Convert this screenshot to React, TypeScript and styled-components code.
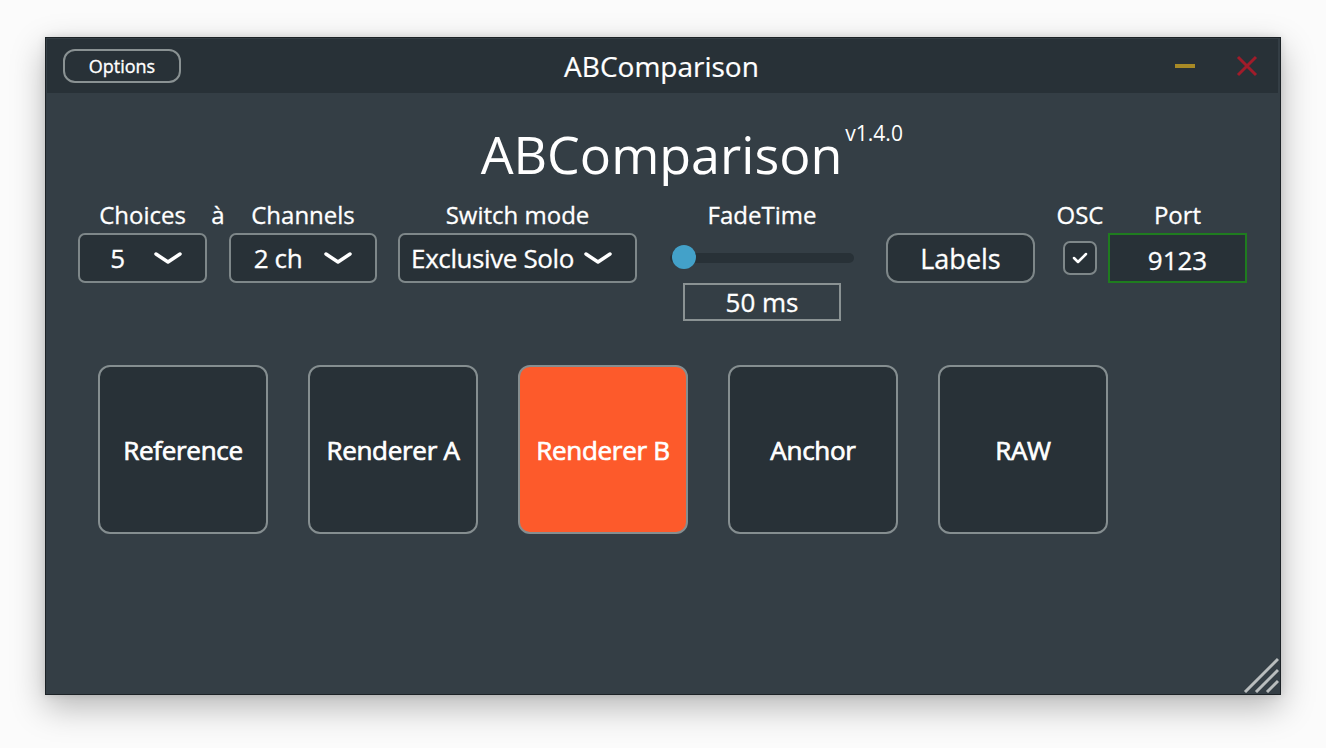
import React from "react";
import styled, { createGlobalStyle } from "styled-components";

const GlobalStyle = createGlobalStyle`
  html, body {
    margin: 0;
    padding: 0;
    background: #ffffff;
    font-family: "Open Sans", "Noto Sans", sans-serif;
  }
`;

const Page = styled.div`
  width: 1326px;
  height: 748px;
  padding: 37px 0 0 45px;
  box-sizing: border-box;
  background: #fbfbfb;
`;

const Window = styled.div`
  position: relative;
  width: 1236px;
  height: 658px;
  box-sizing: border-box;
  border: 1px solid #1c2226;
  background: #343e45;
  box-shadow: 0 12px 32px rgba(0, 0, 0, 0.28), 0 0 8px rgba(0, 0, 0, 0.12);
  display: flex;
  flex-direction: column;
  color: #ffffff;
`;

const TitleBar = styled.div`
  height: 54px;
  margin: 1px 2px 0 1px;
  background: #283137;
  display: flex;
  align-items: center;
  padding: 0 20px 0 16px;
`;

const OptionsButton = styled.div`
  width: 118px;
  height: 34px;
  box-sizing: border-box;
  border: 2px solid #8a9293;
  border-radius: 12px;
  background: #283137;
  display: flex;
  align-items: center;
  justify-content: center;
  font-size: 18px;
  -webkit-text-stroke: 0.35px #ffffff;
`;

const WindowTitle = styled.div`
  flex: 1;
  text-align: center;
  font-size: 28px;
  padding-right: 32px;
  -webkit-text-stroke: 0.2px #ffffff;
`;

const TitleIcons = styled.div`
  display: flex;
  align-items: center;
  gap: 40px;
`;

const Heading = styled.div`
  margin-top: 26px;
  height: 70px;
  text-align: center;
  font-size: 52px;
  line-height: 70px;
  white-space: nowrap;
`;

const Version = styled.span`
  display: inline-block;
  width: 0;
  vertical-align: top;
  font-size: 21px;
  line-height: 20px;
  margin-top: 4px;
  padding-left: 3px;
`;

const ControlRow = styled.div`
  margin-top: 12px;
  padding-left: 32px;
  display: flex;
  align-items: flex-start;
`;

const Column = styled.div<{ $w: number; $ml?: number }>`
  width: ${(p) => p.$w}px;
  margin-left: ${(p) => p.$ml ?? 0}px;
  display: flex;
  flex-direction: column;
  align-items: center;
`;

const Label = styled.div`
  height: 30px;
  line-height: 28px;
  margin-bottom: 2px;
  font-size: 24px;
  white-space: nowrap;
  -webkit-text-stroke: 0.3px #ffffff;
`;

const Combo = styled.div`
  width: 100%;
  height: 50px;
  box-sizing: border-box;
  border: 2px solid #7e8789;
  border-radius: 7px;
  background: #283137;
  display: flex;
  align-items: center;
  padding-right: 22px;
`;

const ComboText = styled.div`
  flex: 1;
  text-align: center;
  font-size: 26px;
  letter-spacing: -0.4px;
  white-space: nowrap;
  padding-left: 2px;
  -webkit-text-stroke: 0.3px #ffffff;
`;

const Slider = styled.div`
  position: relative;
  width: 100%;
  height: 50px;
  display: flex;
  align-items: center;
`;

const Track = styled.div`
  width: 100%;
  height: 10px;
  border-radius: 5px;
  background: #283137;
`;

const Thumb = styled.div`
  position: absolute;
  left: 2px;
  top: 12px;
  width: 24px;
  height: 24px;
  border-radius: 50%;
  background: #43a1c9;
`;

const ValueBox = styled.div`
  width: 158px;
  height: 38px;
  box-sizing: border-box;
  border: 2px solid #8a9293;
  display: flex;
  align-items: center;
  justify-content: center;
  font-size: 26px;
  -webkit-text-stroke: 0.3px #ffffff;
`;

const PushButton = styled.div`
  width: 100%;
  height: 50px;
  box-sizing: border-box;
  border: 2px solid #7e8789;
  border-radius: 12px;
  background: #283137;
  display: flex;
  align-items: center;
  justify-content: center;
  font-size: 27px;
  -webkit-text-stroke: 0.3px #ffffff;
`;

const CheckBox = styled.div`
  margin-top: 8px;
  width: 34px;
  height: 34px;
  box-sizing: border-box;
  border: 2px solid #7e8789;
  border-radius: 7px;
  background: #283137;
  display: flex;
  align-items: center;
  justify-content: center;
`;

const PortBox = styled.div`
  width: 100%;
  height: 50px;
  box-sizing: border-box;
  border: 2px solid #1f7c1f;
  background: #283137;
  display: flex;
  align-items: center;
  justify-content: center;
  font-size: 26px;
  padding-top: 4px;
  -webkit-text-stroke: 0.3px #ffffff;
`;

const ChoiceRow = styled.div`
  margin-top: 44px;
  padding-left: 52px;
  display: flex;
  gap: 40px;
`;

const ChoiceButton = styled.div<{ $active?: boolean }>`
  width: 170px;
  height: 169px;
  box-sizing: border-box;
  border: 2px solid #858e90;
  border-radius: 12px;
  background: ${(p) => (p.$active ? "#fd5a2b" : "#283137")};
  display: flex;
  align-items: center;
  justify-content: center;
  font-size: 26px;
  letter-spacing: -0.3px;
  white-space: nowrap;
  -webkit-text-stroke: 0.7px #ffffff;
`;

const Grip = styled.svg`
  position: absolute;
  right: 1px;
  bottom: 1px;
`;

const Chevron = () => (
  <svg width="30" height="16" viewBox="0 0 30 16">
    <path d="M3 4 L15 12 L27 4" fill="none" stroke="#ffffff" strokeWidth="3.5" strokeLinecap="round" strokeLinejoin="round" />
  </svg>
);

const choices = [
  { name: "Reference" },
  { name: "Renderer A" },
  { name: "Renderer B", active: true },
  { name: "Anchor" },
  { name: "RAW" },
];

export default function App() {
  return (
    <>
      <GlobalStyle />
      <Page>
        <Window>
          <TitleBar>
            <OptionsButton>Options</OptionsButton>
            <WindowTitle>ABComparison</WindowTitle>
            <TitleIcons>
              <svg width="22" height="20" viewBox="0 0 22 20">
                <rect x="1" y="8" width="20" height="4" fill="#a88a26" />
              </svg>
              <svg width="22" height="22" viewBox="0 0 22 22">
                <path d="M2 2 L20 20 M20 2 L2 20" stroke="#a01c2a" strokeWidth="3" />
              </svg>
            </TitleIcons>
          </TitleBar>

          <Heading>
            ABComparison<Version>v1.4.0</Version>
          </Heading>

          <ControlRow>
            <Column $w={129}>
              <Label>Choices</Label>
              <Combo>
                <ComboText>5</ComboText>
                <Chevron />
              </Combo>
            </Column>
            <Column $w={22}>
              <Label>à</Label>
            </Column>
            <Column $w={148}>
              <Label>Channels</Label>
              <Combo>
                <ComboText>2 ch</ComboText>
                <Chevron />
              </Combo>
            </Column>
            <Column $w={239} $ml={21}>
              <Label>Switch mode</Label>
              <Combo>
                <ComboText>Exclusive Solo</ComboText>
                <Chevron />
              </Combo>
            </Column>
            <Column $w={184} $ml={33}>
              <Label>FadeTime</Label>
              <Slider>
                <Track />
                <Thumb />
              </Slider>
              <ValueBox>50 ms</ValueBox>
            </Column>
            <Column $w={149} $ml={32}>
              <Label />
              <PushButton>Labels</PushButton>
            </Column>
            <Column $w={34} $ml={28}>
              <Label>OSC</Label>
              <CheckBox>
                <svg width="18" height="14" viewBox="0 0 18 14">
                  <path d="M3 7 L7 11 L15 3" fill="none" stroke="#ffffff" strokeWidth="2.5" strokeLinecap="round" strokeLinejoin="round" />
                </svg>
              </CheckBox>
            </Column>
            <Column $w={139} $ml={11}>
              <Label>Port</Label>
              <PortBox>9123</PortBox>
            </Column>
          </ControlRow>

          <ChoiceRow>
            {choices.map((c) => (
              <ChoiceButton key={c.name} $active={c.active}>
                {c.name}
              </ChoiceButton>
            ))}
          </ChoiceRow>

          <Grip width="36" height="36" viewBox="0 0 36 36">
            <path d="M2 35 L35 2 M13 35 L35 13 M24 35 L35 24" stroke="#b9bdbe" strokeWidth="3" />
          </Grip>
        </Window>
      </Page>
    </>
  );
}
